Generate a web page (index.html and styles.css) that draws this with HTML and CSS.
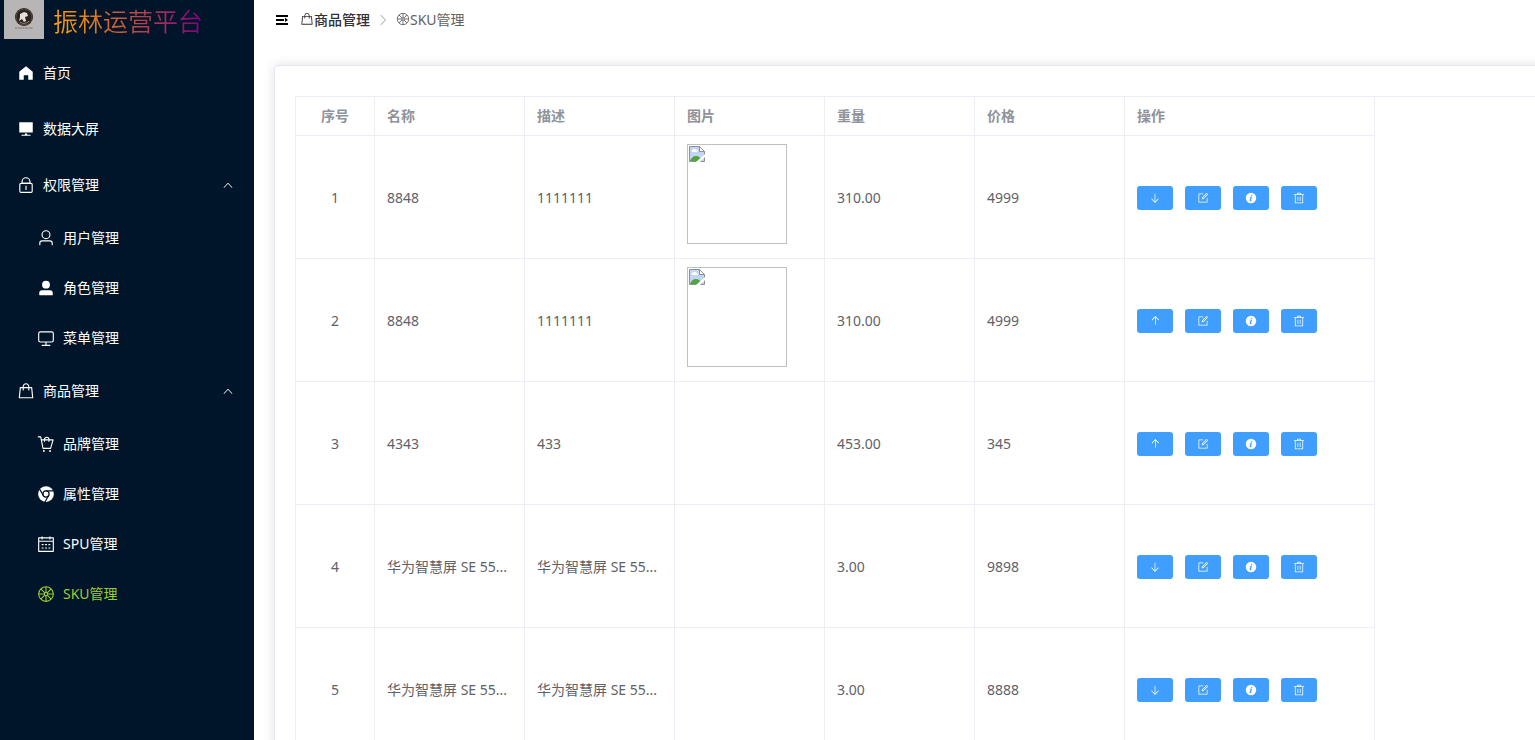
FILE: index.html
```html
<!DOCTYPE html>
<html lang="zh-CN">
<head>
<meta charset="utf-8">
<title>振林运营平台</title>
<link rel="stylesheet" href="styles.css">
</head>
<body>
<svg class="sprite" aria-hidden="true">
  <symbol id="home" viewBox="0 0 1024 1024"><path d="M512 128 128 447.936V896h255.936V640H640v256h255.936V447.936z"/></symbol>
  <symbol id="platform" viewBox="0 0 1024 1024"><path d="M448 832v-64h128v64h192v64H256v-64zM128 704V128h768v576z"/></symbol>
  <symbol id="lock" viewBox="0 0 1024 1024"><path d="M224 448a32 32 0 0 0-32 32v384a32 32 0 0 0 32 32h576a32 32 0 0 0 32-32V480a32 32 0 0 0-32-32zm0-64h576a96 96 0 0 1 96 96v384a96 96 0 0 1-96 96H224a96 96 0 0 1-96-96V480a96 96 0 0 1 96-96"/><path d="M512 544a32 32 0 0 1 32 32v192a32 32 0 1 1-64 0V576a32 32 0 0 1 32-32m192-160v-64a192 192 0 1 0-384 0v64zM512 64a256 256 0 0 1 256 256v128H256V320A256 256 0 0 1 512 64"/></symbol>
  <symbol id="user" viewBox="0 0 1024 1024"><path d="M512 512a192 192 0 1 0 0-384 192 192 0 0 0 0 384m0 64a256 256 0 1 1 0-512 256 256 0 0 1 0 512m320 320v-96a96 96 0 0 0-96-96H288a96 96 0 0 0-96 96v96a32 32 0 1 1-64 0v-96a160 160 0 0 1 160-160h448a160 160 0 0 1 160 160v96a32 32 0 1 1-64 0"/></symbol>
  <symbol id="user-filled" viewBox="0 0 1024 1024"><path d="M288 320a224 224 0 1 0 448 0 224 224 0 1 0-448 0m544 608H160a32 32 0 0 1-32-32v-96a160 160 0 0 1 160-160h448a160 160 0 0 1 160 160v96a32 32 0 0 1-32 32z"/></symbol>
  <symbol id="monitor" viewBox="0 0 1024 1024"><path d="M544 768v128h192a32 32 0 1 1 0 64H288a32 32 0 1 1 0-64h192V768H192A128 128 0 0 1 64 640V256a128 128 0 0 1 128-128h640a128 128 0 0 1 128 128v384a128 128 0 0 1-128 128zM192 192a64 64 0 0 0-64 64v384a64 64 0 0 0 64 64h640a64 64 0 0 0 64-64V256a64 64 0 0 0-64-64z"/></symbol>
  <symbol id="goods" viewBox="0 0 1024 1024"><path d="M320 288v-22.336C320 154.688 405.504 64 512 64s192 90.688 192 201.664v22.4h131.072a32 32 0 0 1 31.808 28.8l57.6 576a32 32 0 0 1-31.808 35.2H131.328a32 32 0 0 1-31.808-35.2l57.6-576a32 32 0 0 1 31.808-28.8H320zm64 0h256v-22.336C640 189.248 582.272 128 512 128c-70.272 0-128 61.248-128 137.664v22.4zm-64 64H217.92l-51.2 512h690.56l-51.264-512H704v96a32 32 0 1 1-64 0v-96H384v96a32 32 0 0 1-64 0z"/></symbol>
  <symbol id="trolley" viewBox="0 0 1024 1024"><g fill="none" stroke="currentColor" stroke-width="64" stroke-linecap="round" stroke-linejoin="round"><path d="M72 110h140l130 650h430l144-480H248"/><path d="M430 270v-20a125 125 0 0 1 250 0v20M430 280v80M680 280v80"/></g><circle cx="390" cy="905" r="55"/><circle cx="740" cy="905" r="55"/></symbol>
  <symbol id="chrome" viewBox="0 0 1024 1024"><defs><mask id="chrome-mask"><circle cx="512" cy="512" r="448" fill="#fff"/><circle cx="512" cy="512" r="175" fill="none" stroke="#000" stroke-width="70"/><path d="M500 337h440M664 600 445 980M360 600 140 219" stroke="#000" stroke-width="70"/></mask></defs><path d="M0 0h1024v1024H0z" mask="url(#chrome-mask)"/></symbol>
  <symbol id="calendar" viewBox="0 0 1024 1024"><path d="M128 384v512h768V192H768v32a32 32 0 1 1-64 0v-32H320v32a32 32 0 0 1-64 0v-32H128v128h768v64zm192-256h384V96a32 32 0 1 1 64 0v32h160a32 32 0 0 1 32 32v768a32 32 0 0 1-32 32H96a32 32 0 0 1-32-32V160a32 32 0 0 1 32-32h160V96a32 32 0 0 1 64 0zm-32 384h64a32 32 0 0 1 0 64h-64a32 32 0 0 1 0-64m0 192h64a32 32 0 1 1 0 64h-64a32 32 0 1 1 0-64m192-192h64a32 32 0 0 1 0 64h-64a32 32 0 0 1 0-64m0 192h64a32 32 0 1 1 0 64h-64a32 32 0 1 1 0-64m192-192h64a32 32 0 1 1 0 64h-64a32 32 0 1 1 0-64m0 192h64a32 32 0 1 1 0 64h-64a32 32 0 1 1 0-64"/></symbol>
  <symbol id="orange" viewBox="0 0 1024 1024"><g fill="none" stroke="currentColor" stroke-width="64"><circle cx="512" cy="512" r="416"/><circle cx="512" cy="512" r="96"/><path d="M512 96v320M512 608v320M96 512h320M608 512h320M218 218l226 226M580 580l226 226M806 218 580 444M444 580 218 806"/></g></symbol>
  <symbol id="up" viewBox="0 0 1024 1024"><path d="m488.832 344.32-339.84 356.672a32 32 0 0 0 0 44.16l.384.384a29.44 29.44 0 0 0 42.688 0l320-335.872 319.872 335.872a29.44 29.44 0 0 0 42.688 0l.384-.384a32 32 0 0 0 0-44.16L535.168 344.32a32 32 0 0 0-46.336 0"/></symbol>
  <symbol id="right" viewBox="0 0 1024 1024"><path d="M340.864 149.312a30.592 30.592 0 0 0 0 42.752L652.736 512 340.864 831.872a30.592 30.592 0 0 0 0 42.752 29.12 29.12 0 0 0 41.728 0L714.24 534.336a32 32 0 0 0 0-44.672L382.592 149.376a29.12 29.12 0 0 0-41.728 0z"/></symbol>
  <symbol id="expand" viewBox="0 0 1024 1024"><path d="M128 192h768v128H128zm0 256h512v128H128zm0 256h768v128H128zm576-352 192 160-192 128z"/></symbol>
  <symbol id="top" viewBox="0 0 1024 1024"><path d="M572.235 205.282v600.365a30.118 30.118 0 1 1-60.235 0V205.282L292.382 438.633a28.913 28.913 0 0 1-42.646 0 33.43 33.43 0 0 1 0-45.236l271.058-288.045a28.913 28.913 0 0 1 42.647 0L834.5 393.397a33.43 33.43 0 0 1 0 45.176 28.913 28.913 0 0 1-42.647 0l-219.618-233.23z"/></symbol>
  <symbol id="bottom" viewBox="0 0 1024 1024"><path d="M544 805.888V168a32 32 0 1 0-64 0v637.888L246.656 557.952a30.72 30.72 0 0 0-45.312 0 35.52 35.52 0 0 0 0 48.064l288 306.048a30.72 30.72 0 0 0 45.312 0l288-306.048a35.52 35.52 0 0 0 0-48 30.72 30.72 0 0 0-45.312 0L544 805.824z"/></symbol>
  <symbol id="edit" viewBox="0 0 1024 1024"><path d="M832 512a32 32 0 1 1 64 0v352a32 32 0 0 1-32 32H160a32 32 0 0 1-32-32V160a32 32 0 0 1 32-32h352a32 32 0 0 1 0 64H192v640h640z"/><path d="m469.952 554.24 52.8-7.552L847.104 222.4a32 32 0 1 0-45.248-45.248L477.44 501.44l-7.552 52.8zm422.4-422.4a96 96 0 0 1 0 135.808l-331.84 331.84a32 32 0 0 1-18.112 9.088L436.8 623.68a32 32 0 0 1-36.224-36.224l15.104-105.6a32 32 0 0 1 9.024-18.112l331.904-331.84a96 96 0 0 1 135.744 0z"/></symbol>
  <symbol id="info" viewBox="0 0 1024 1024"><path d="M512 64a448 448 0 1 1 0 896.064A448 448 0 0 1 512 64m67.2 275.072c33.28 0 60.288-23.104 60.288-57.344s-27.072-57.344-60.288-57.344c-33.28 0-60.16 23.104-60.16 57.344s26.88 57.344 60.16 57.344M590.912 699.2c0-6.848 2.368-24.64 1.024-34.752l-52.608 60.544c-10.88 11.456-24.512 19.392-30.912 17.28a12.992 12.992 0 0 1-8.256-14.72l87.68-276.992c7.168-35.136-12.544-67.2-54.336-71.296-44.096 0-108.992 44.736-148.48 101.504 0 6.784-1.28 23.68.064 33.792l52.544-60.608c10.88-11.328 23.552-19.328 29.952-17.152a12.8 12.8 0 0 1 7.808 16.128L388.48 728.576c-10.048 32.256 8.96 63.872 55.04 71.04 67.84 0 107.904-43.648 147.456-100.416z"/></symbol>
  <symbol id="delete" viewBox="0 0 1024 1024"><path d="M160 256H96a32 32 0 0 1 0-64h256V95.936a32 32 0 0 1 32-32h256a32 32 0 0 1 32 32V192h256a32 32 0 1 1 0 64h-64v672a32 32 0 0 1-32 32H192a32 32 0 0 1-32-32zm448-64v-64H416v64zM224 896h576V256H224zm192-128a32 32 0 0 1-32-32V416a32 32 0 0 1 64 0v320a32 32 0 0 1-32 32m192 0a32 32 0 0 1-32-32V416a32 32 0 0 1 64 0v320a32 32 0 0 1-32 32"/></symbol>
  <symbol id="missing" viewBox="0 0 16 16"><path d="M.5.5h10l5 5v10H.5z" fill="#c3d5f5" stroke="#8f8f8f"/><path d="M10.500.5v5h5z" fill="#fff" stroke="#8f8f8f"/><path d="M3 6a1.500 1.500 0 0 1 1-2.500A2 2 0 0 1 7.500 4 1 1 0 0 1 8 6z" fill="#fff"/><path d="M1 15c1-3 3-5 6-5s5 2 6 5z" fill="#52a53a"/><path d="M7 16 16 8v3l-5 5z" fill="#fff"/></symbol>
</svg>

<div class="layout">
  <aside class="sidebar">
    <div class="brand">
      <svg class="brand-logo" viewBox="0 0 40 39" role="img" aria-label="logo">
        <path d="M0 0h40v39H0z" fill="#b7b5b5"/>
        <circle cx="20" cy="17" r="9" fill="#292421"/>
        <circle cx="20" cy="17" r="8" fill="none" stroke="#5a4a40" stroke-width="1"/>
        <path d="M16 14l4-2 3 1 1 3-3 1 1 4-2 1-2-3-3 2 1-4z" fill="#e4dfd9"/>
        <path d="M16 22c3 2 6 2 9-1" fill="none" stroke="#a8917c" stroke-width="1"/>
        <path d="M11 28h18" stroke="#7b7775" stroke-width="1" stroke-dasharray="2 .5"/>
      </svg>
      <h1 class="brand-title">振林运营平台</h1>
    </div>
    <nav class="menu">
      <a class="item" href="#"><svg class="item-icon"><use href="#home"/></svg>首页</a>
      <a class="item" href="#"><svg class="item-icon"><use href="#platform"/></svg>数据大屏</a>
      <button class="item" type="button"><svg class="item-icon"><use href="#lock"/></svg>权限管理<svg class="caret"><use href="#up"/></svg></button>
      <a class="item sub" href="#"><svg class="item-icon"><use href="#user"/></svg>用户管理</a>
      <a class="item sub" href="#"><svg class="item-icon"><use href="#user-filled"/></svg>角色管理</a>
      <a class="item sub" href="#"><svg class="item-icon"><use href="#monitor"/></svg>菜单管理</a>
      <button class="item" type="button"><svg class="item-icon"><use href="#goods"/></svg>商品管理<svg class="caret"><use href="#up"/></svg></button>
      <a class="item sub" href="#"><svg class="item-icon"><use href="#trolley"/></svg>品牌管理</a>
      <a class="item sub" href="#"><svg class="item-icon"><use href="#chrome"/></svg>属性管理</a>
      <a class="item sub" href="#"><svg class="item-icon"><use href="#calendar"/></svg>SPU管理</a>
      <a class="item sub active" href="#"><svg class="item-icon"><use href="#orange"/></svg>SKU管理</a>
    </nav>
  </aside>

  <div class="page">
    <header class="topbar">
      <button class="fold" type="button" aria-label="折叠菜单"><svg class="fold-icon"><use href="#expand"/></svg></button>
      <nav class="crumbs">
        <a class="crumb crumb-link" href="#"><svg class="crumb-icon"><use href="#goods"/></svg>商品管理</a>
        <svg class="separator"><use href="#right"/></svg>
        <span class="crumb"><svg class="crumb-icon"><use href="#orange"/></svg>SKU管理</span>
      </nav>
    </header>
    <main class="content">
      <section class="card">
        <div class="table-wrap">
          <table class="table">
            <colgroup><col class="col-index"><col class="col-data"><col class="col-data"><col class="col-data"><col class="col-data"><col class="col-data"><col class="col-actions"></colgroup>
            <thead>
              <tr><th class="center">序号</th><th>名称</th><th>描述</th><th>图片</th><th>重量</th><th>价格</th><th>操作</th></tr>
            </thead>
            <tbody>
              <tr><td class="center">1</td><td>8848</td><td>1111111</td><td class="picture"><div class="thumb"><svg class="thumb-icon"><use href="#missing"/></svg></div></td><td>310.00</td><td>4999</td>
                <td><div class="actions"><button class="btn" type="button" aria-label="下架"><svg class="btn-icon"><use href="#bottom"/></svg></button><button class="btn" type="button" aria-label="编辑"><svg class="btn-icon"><use href="#edit"/></svg></button><button class="btn" type="button" aria-label="详情"><svg class="btn-icon"><use href="#info"/></svg></button><button class="btn" type="button" aria-label="删除"><svg class="btn-icon"><use href="#delete"/></svg></button></div></td></tr>
              <tr><td class="center">2</td><td>8848</td><td>1111111</td><td class="picture"><div class="thumb"><svg class="thumb-icon"><use href="#missing"/></svg></div></td><td>310.00</td><td>4999</td>
                <td><div class="actions"><button class="btn" type="button" aria-label="上架"><svg class="btn-icon"><use href="#top"/></svg></button><button class="btn" type="button" aria-label="编辑"><svg class="btn-icon"><use href="#edit"/></svg></button><button class="btn" type="button" aria-label="详情"><svg class="btn-icon"><use href="#info"/></svg></button><button class="btn" type="button" aria-label="删除"><svg class="btn-icon"><use href="#delete"/></svg></button></div></td></tr>
              <tr><td class="center">3</td><td>4343</td><td>433</td><td></td><td>453.00</td><td>345</td>
                <td><div class="actions"><button class="btn" type="button" aria-label="上架"><svg class="btn-icon"><use href="#top"/></svg></button><button class="btn" type="button" aria-label="编辑"><svg class="btn-icon"><use href="#edit"/></svg></button><button class="btn" type="button" aria-label="详情"><svg class="btn-icon"><use href="#info"/></svg></button><button class="btn" type="button" aria-label="删除"><svg class="btn-icon"><use href="#delete"/></svg></button></div></td></tr>
              <tr><td class="center">4</td><td>华为智慧屏 SE 55...</td><td>华为智慧屏 SE 55...</td><td></td><td>3.00</td><td>9898</td>
                <td><div class="actions"><button class="btn" type="button" aria-label="下架"><svg class="btn-icon"><use href="#bottom"/></svg></button><button class="btn" type="button" aria-label="编辑"><svg class="btn-icon"><use href="#edit"/></svg></button><button class="btn" type="button" aria-label="详情"><svg class="btn-icon"><use href="#info"/></svg></button><button class="btn" type="button" aria-label="删除"><svg class="btn-icon"><use href="#delete"/></svg></button></div></td></tr>
              <tr><td class="center">5</td><td>华为智慧屏 SE 55...</td><td>华为智慧屏 SE 55...</td><td></td><td>3.00</td><td>8888</td>
                <td><div class="actions"><button class="btn" type="button" aria-label="下架"><svg class="btn-icon"><use href="#bottom"/></svg></button><button class="btn" type="button" aria-label="编辑"><svg class="btn-icon"><use href="#edit"/></svg></button><button class="btn" type="button" aria-label="详情"><svg class="btn-icon"><use href="#info"/></svg></button><button class="btn" type="button" aria-label="删除"><svg class="btn-icon"><use href="#delete"/></svg></button></div></td></tr>
            </tbody>
          </table>
        </div>
      </section>
    </main>
  </div>
</div>
</body>
</html>
```

FILE: styles.css
```css
* { box-sizing: border-box; }

body {
  margin: 0;
  font-family: "Noto Sans", "Noto Sans CJK SC", sans-serif;
  font-size: 14px;
  line-height: 22px;
  color: #606266;
  background: #fff;
}

svg { fill: currentColor; flex: none; }
a { color: inherit; text-decoration: none; }
button { font: inherit; color: inherit; background: none; border: 0; padding: 0; cursor: pointer; }

.sprite { display: block; width: 0; height: 0; }

.layout { display: flex; height: 100vh; overflow: hidden; }

/* Sidebar */
.sidebar { flex: none; width: 254px; background: #001529; color: #fff; }

.brand { display: flex; align-items: flex-start; gap: 9px; height: 45px; padding-left: 4px; }
.brand-logo { width: 40px; height: 39px; }
.brand-title {
  margin: 0;
  font-family: "Noto Sans CJK SC", sans-serif;
  font-size: 25px;
  font-weight: 350;
  line-height: 40px;
  color: transparent;
  background: linear-gradient(to right, orange, purple);
  background-clip: text;
  -webkit-background-clip: text;
}

.menu { display: flex; flex-direction: column; }
.item { display: flex; align-items: center; gap: 8px; height: 56px; padding: 0 20px 0 17px; text-align: left; }
.item-icon { width: 18px; height: 18px; }
.sub { height: 50px; padding-left: 37px; }
.active { color: #9acd32; }
.caret { width: 12px; height: 12px; margin-left: auto; }

/* Header */
.page { flex: 1; min-width: 0; }
.topbar { display: flex; align-items: center; gap: 10px; height: 45px; padding: 0 20px 5px; }
.fold { display: flex; color: #000; }
.fold-icon { width: 16px; height: 16px; }
.crumbs { display: flex; align-items: center; gap: 6px; }
.crumb { display: flex; align-items: center; }
.crumb-link { color: #303133; font-weight: 500; }
.crumb-icon, .separator { width: 14px; height: 14px; }
.crumb-icon { margin-bottom: 2px; }
.separator { color: #a8abb2; }

/* Card runs past the right edge of the window */
.content { padding: 20px 0 20px 20px; margin-right: -40px; }
.card {
  padding: 30px 20px;
  background: #fff;
  border: 1px solid #e4e7ed;
  border-radius: 4px;
  box-shadow: 0 0 12px rgba(0, 0, 0, .12);
}

/* Table */
.table-wrap { border: solid #ebeef5; border-width: 1px 0 0 1px; }
.table { table-layout: fixed; width: 1079px; border-collapse: separate; border-spacing: 0; }
.col-index { width: 79px; }
.col-data { width: 150px; }
.col-actions { width: 250px; }
.table th, .table td {
  padding: 8px 12px;
  border: solid #ebeef5;
  border-width: 0 1px 1px 0;
  text-align: left;
  white-space: nowrap;
  overflow: hidden;
  text-overflow: ellipsis;
}
.table th { color: #909399; font-weight: 700; }
.table td { height: 123px; padding-top: 10px; }
.table .center { text-align: center; }
.table .picture { padding-top: 8px; vertical-align: top; }
.thumb { width: 100px; height: 100px; padding: 1px; border: 1px solid #c0c0c0; }
.thumb-icon { display: block; width: 16px; height: 16px; }

.actions { display: flex; gap: 12px; }
.btn { display: flex; align-items: center; justify-content: center; width: 36px; height: 24px; border-radius: 3px; background: #409eff; color: #fff; }
.btn-icon { width: 12px; height: 12px; }
```
